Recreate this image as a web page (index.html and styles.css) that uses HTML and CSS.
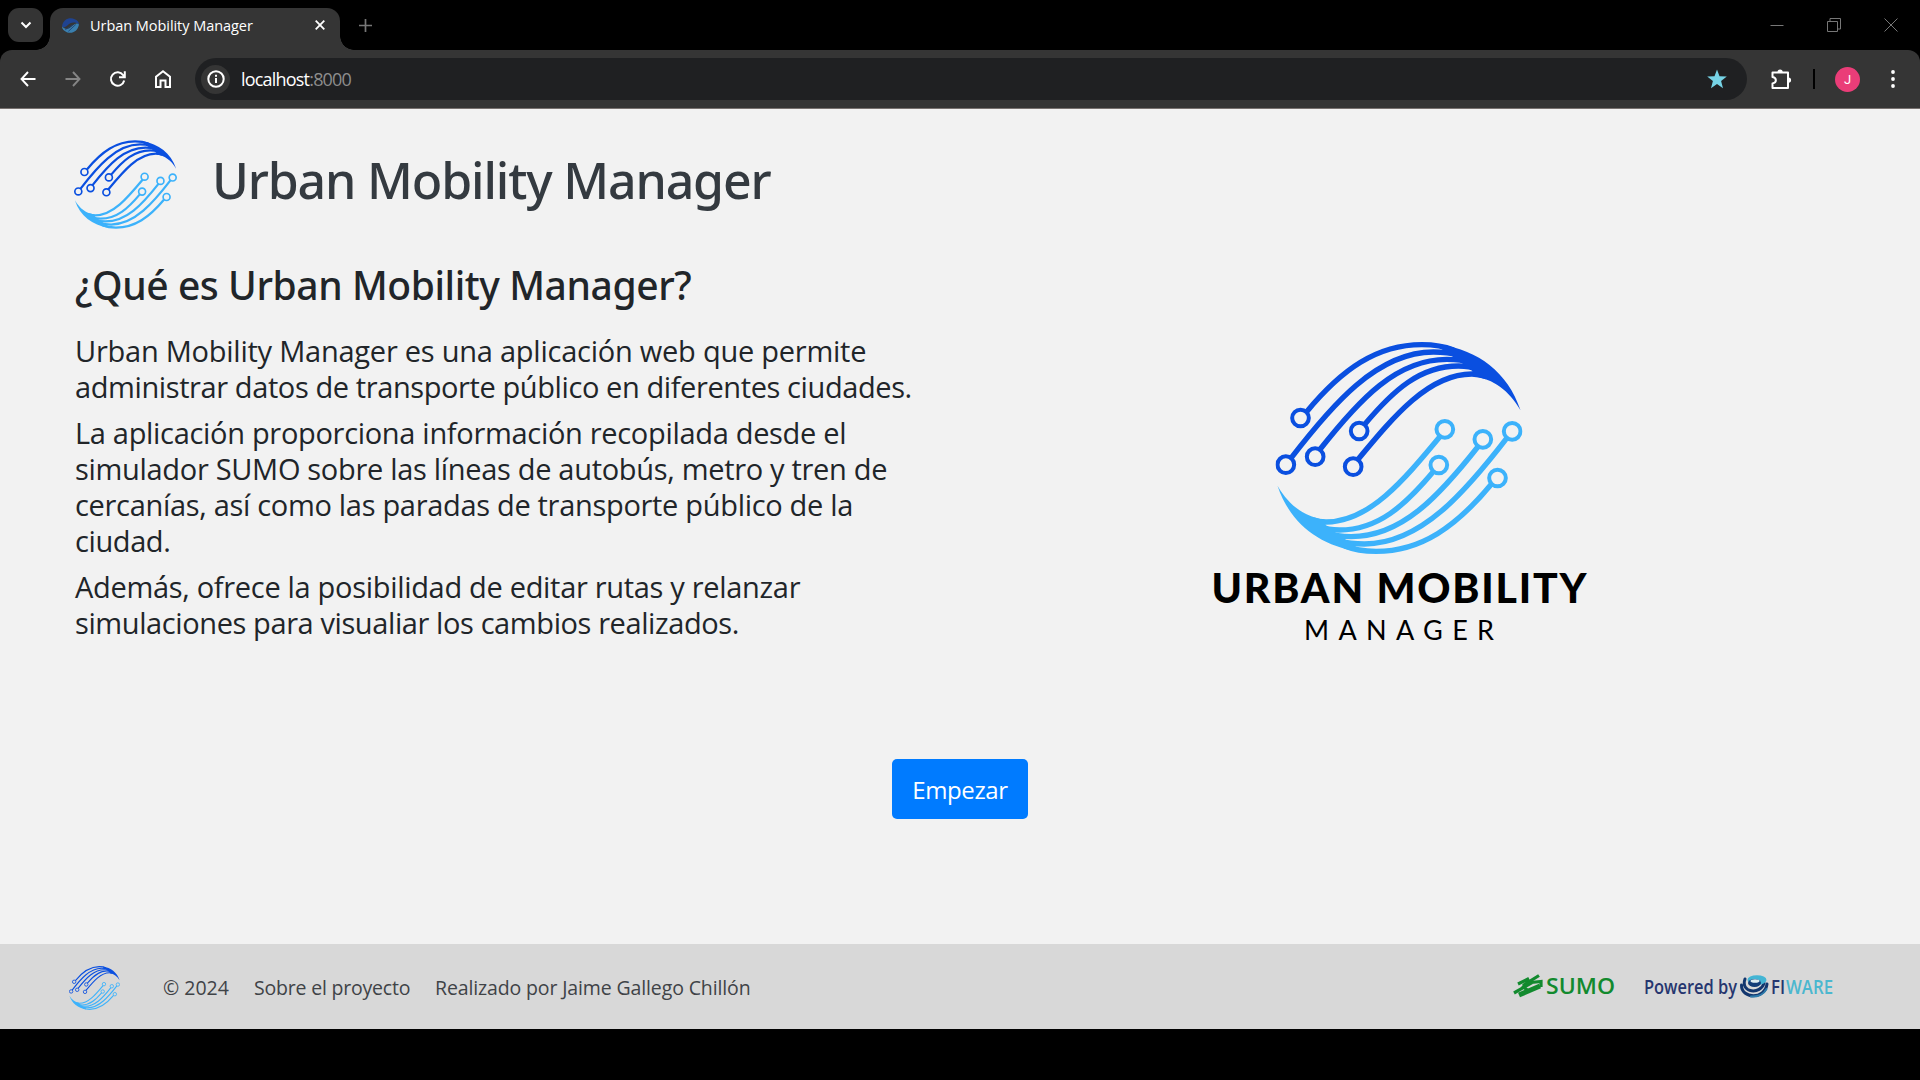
FILE: index.html
```html
<!DOCTYPE html>
<html lang="es">
<head>
<meta charset="utf-8">
<title>Urban Mobility Manager</title>
<link rel="stylesheet" href="styles.css">
</head>
<body>
<svg class="defs" width="0" height="0" aria-hidden="true">
  <defs>
    <g id="swoosh">
      <g fill="none" stroke="currentColor" stroke-width="16">
        <path d="M139 246C245 118 350 44 485 44C520 44 550 48 580 60"/>
        <path d="M92 385C215 225 350 66 520 66C550 66 570 68 600 76"/>
        <path d="M178 360C300 205 410 88 560 88C590 88 610 90 630 98"/>
        <path d="M312 285C400 180 480 108 595 108C620 108 635 110 650 118"/>
        <path d="M292 390C400 260 505 132 635 132C650 132 665 135 680 140"/>
      </g>
      <path fill="currentColor" d="M540 43C655 63 742 125 781 241C745 180 700 148 640 139L636 122L606 100L576 79L545 58Z"/>
      <g fill="none" stroke="currentColor" stroke-width="12">
        <circle cx="121" cy="264" r="25"/>
        <circle cx="77" cy="404" r="25"/>
        <circle cx="165" cy="380" r="25"/>
        <circle cx="297" cy="303" r="25"/>
        <circle cx="279" cy="410" r="25"/>
      </g>
    </g>
    <symbol id="logo" viewBox="46 36 741 636">
      <use href="#swoosh" color="#0a4fe0"/>
      <use href="#swoosh" color="#3cb2fb" transform="rotate(180 416.5 354)"/>
    </symbol>
  </defs>
</svg>

<div class="tabstrip">
  <div class="tab-search"><svg width="12" height="8" viewBox="0 0 12 8"><path d="M1.500 1.500L6 6L10.500 1.500" fill="none" stroke="#fff" stroke-width="2"/></svg></div>
  <div class="tab">
    <svg class="favicon" viewBox="0 0 16 14"><path d="M0 8C1 1 7-1 12 1C15 2 16 4 16 6C12 3 8 4 5 7C3 9 1 9 0 8Z" fill="#1f4390"/><path d="M16 6C15 12 10 15 5 13.500C2 12.500 0 10.500 0 8C3 11 6 11 9 8C11 6 14 4 16 6Z" fill="#3a7fae"/><path d="M3 11L10 6.500M6 12.500L13 6" stroke="#1c3f78" stroke-width=".8"/></svg>
    <span class="tab-title">Urban Mobility Manager</span>
    <svg width="10" height="10" viewBox="0 0 10 10"><path d="M.7 .7L9.300 9.300M9.300 .7L.7 9.300" stroke="#fff" stroke-width="1.800"/></svg>
  </div>
  <svg class="new-tab" width="13" height="13" viewBox="0 0 13 13"><path d="M6.500 0V13M0 6.500H13" stroke="#777" stroke-width="1.700"/></svg>
  <div class="window-buttons">
    <svg width="14" height="14" viewBox="0 0 14 14"><path d="M.5 7.500H13.500" stroke="#777"/></svg>
    <svg width="14" height="14" viewBox="0 0 14 14"><path d="M.5 3.500H10.500V13.500H.5ZM3 3V.5H13.500V11H11" fill="none" stroke="#777"/></svg>
    <svg width="14" height="14" viewBox="0 0 14 14"><path d="M.5 .5L13.500 13.500M13.500 .5L.5 13.500" stroke="#777"/></svg>
  </div>
</div>

<div class="toolbar">
  <svg class="nav" viewBox="0 0 16 16"><path d="M8 1L1.500 8L8 15M1.500 8H15.500" fill="none" stroke="#fff" stroke-width="1.900"/></svg>
  <svg class="nav" viewBox="0 0 16 16"><path d="M8 1L14.500 8L8 15M14.500 8H.5" fill="none" stroke="#858585" stroke-width="1.900"/></svg>
  <svg class="nav" viewBox="0 0 16 16"><path d="M14.200 9.500A6.700 6.700 0 1 1 13.200 4.200L14.600 6M14.800 .3V6.200H9" fill="none" stroke="#fff" stroke-width="2"/></svg>
  <svg class="nav home" viewBox="0 0 16 18"><path d="M1 17V6.800L8 1.300L15 6.800V17H10.500V10.500H5.500V17Z" fill="none" stroke="#fff" stroke-width="2"/></svg>
  <div class="omnibox">
    <span class="site-info"><svg width="18" height="18" viewBox="0 0 18 18"><circle cx="9" cy="9" r="7.700" fill="none" stroke="#fff" stroke-width="2"/><path d="M9 8V13M9 4.700V6.700" stroke="#fff" stroke-width="2"/></svg></span>
    <span class="url">localhost<span class="port">:8000</span></span>
    <svg class="star" width="20" height="20" viewBox="0 0 20 20"><path d="M10 .5L12.500 7.300L19.800 7.600L14.100 12.100L16 19.200L10 15.100L4 19.200L5.900 12.100L.2 7.600L7.500 7.300Z" fill="#76d3e6"/></svg>
  </div>
  <svg class="ext" width="21" height="21" viewBox="0 0 21 21"><path d="M1.500 3.500H17V19H1.500V14.500C6 13.500 6 9 1.500 8Z" fill="none" stroke="#fff" stroke-width="2" stroke-linejoin="round"/><path d="M6.500 3A2.600 2.600 0 0 1 11.700 3ZM17.500 8.500A2.600 2.600 0 0 1 17.500 13.700Z" fill="#fff"/></svg>
  <span class="divider"></span>
  <span class="avatar">J</span>
  <svg class="menu" width="4" height="18" viewBox="0 0 4 18"><g fill="#fff"><circle cx="2" cy="2" r="1.900"/><circle cx="2" cy="9" r="1.900"/><circle cx="2" cy="16" r="1.900"/></g></svg>
</div>

<div class="page">
  <header class="brand">
    <svg class="brand-logo"><use href="#logo"/></svg>
    <h1>Urban Mobility Manager</h1>
  </header>
  <main>
    <section class="about">
      <h2>¿Qué es Urban Mobility Manager?</h2>
      <p><span class="wide">Urban Mobility Manager es una aplicación web que permite</span><br><span class="narrow">administrar datos de transporte público en diferentes ciudades.</span></p>
      <p>La aplicación proporciona información recopilada desde el<br>simulador SUMO sobre las líneas de autobús, metro y tren de<br>cercanías, así como las paradas de transporte público de la<br><span class="narrow">ciudad.</span></p>
      <p>Además, ofrece la posibilidad de editar rutas y relanzar<br><span class="narrow">simulaciones para visualiar los cambios realizados.</span></p>
    </section>
    <svg class="hero" width="376" height="304" viewBox="0 0 376 304">
      <use href="#logo" x="62.500" y="0" width="247" height="212"/>
      <text class="word" x="-1.500" y="261" textLength="375">URBAN MOBILITY</text>
      <text class="sub" x="91" y="298" textLength="190">MANAGER</text>
    </svg>
  </main>
  <div class="actions"><button class="start">Empezar</button></div>
  <footer>
    <svg class="footer-logo"><use href="#logo"/></svg>
    <span class="copy">© 2024</span>
    <span class="about-link">Sobre el proyecto</span>
    <span class="author">Realizado por Jaime Gallego Chillón</span>
    <svg class="sumo" width="104" height="30" viewBox="0 -1 104 30">
      <g fill="none" stroke="#128a2e">
        <path d="M5 10L16 4.500M10 11.500L26 1.500M1 19L19 8.500" stroke-width="3.200"/>
        <path d="M6 21L27 12" stroke-width="5"/>
        <path d="M13 9L28 7.500V13M9 12L17 18" stroke-width="3.200"/>
      </g>
      <text class="sumo-text" x="33" y="19.500" textLength="69" lengthAdjust="spacingAndGlyphs">SUMO</text>
    </svg>
    <svg class="fiware" width="192" height="30" viewBox="0 -1 192 30">
      <text class="powered" x="0" y="20" textLength="93" lengthAdjust="spacingAndGlyphs">Powered by</text>
      <g fill="none" stroke-linecap="round">
        <path d="M97.500 11C97 25 121 26 123 10" stroke="#12366e" stroke-width="3"/>
        <path d="M101 5C96 19 117 21 120 9" stroke="#12366e" stroke-width="3"/>
        <path d="M107 22.500C114 23 120 20 122.500 15" stroke="#2d7bab" stroke-width="2"/>
      </g>
      <ellipse cx="113" cy="6" rx="9.500" ry="4.800" fill="#43b5d4"/>
      <ellipse cx="110.500" cy="9" rx="6.500" ry="4" fill="#123c78"/>
      <ellipse cx="111" cy="7" rx="4.500" ry="1.800" fill="#dcebf0"/>
      <text class="fi" x="127" y="20" textLength="14" lengthAdjust="spacingAndGlyphs">FI</text>
      <text class="ware" x="142" y="20" textLength="47" lengthAdjust="spacingAndGlyphs">WARE</text>
    </svg>
  </footer>
</div>
</body>
</html>
```
FILE: styles.css
```css
* { box-sizing: border-box; }
body {
  margin: 0;
  width: 1920px;
  height: 1080px;
  overflow: hidden;
  background: #000;
  font-family: "Open Sans", "Noto Sans", sans-serif;
  display: flex;
  flex-direction: column;
  white-space: nowrap;
}
svg { flex: none; display: block; overflow: visible; }
.defs { position: absolute; }

.tabstrip { height: 50px; display: flex; align-items: center; background: #000; flex: none; }
.tab-search {
  position: relative; z-index: 1;
  width: 35px; height: 34px; margin-left: 8px; border-radius: 11px;
  background: #343434; display: flex; align-items: center; justify-content: center;
}
.tab {
  position: relative; align-self: flex-end; width: 290px; height: 42px; margin-left: 7px; padding: 0 15px 8px 12px;
  background: #353535; border-radius: 13px 13px 0 0;
  display: flex; align-items: center;
}
.tab::before, .tab::after {
  content: ""; position: absolute; bottom: 0; width: 14px; height: 14px;
}
.tab::before { left: -14px; background: radial-gradient(circle at 0 0, #000 13.5px, #353535 14px); }
.tab::after { right: -14px; background: radial-gradient(circle at 100% 0, #000 13.5px, #353535 14px); }
.favicon { width: 17px; height: 15px; }
.tab-title { flex: 1; margin-left: 11px; color: #fff; font-size: 14.500px; letter-spacing: -.05px; }
.new-tab { margin-left: 19px; }
.window-buttons { margin-left: auto; display: flex; gap: 43px; padding-right: 22px; }

.toolbar {
  height: 59px; flex: none; display: flex; align-items: center; background: #353535;
  border-radius: 12px 12px 0 0; border-bottom: 1px solid #77716f; padding: 0 25px 0 20px;
}
.nav { width: 16px; height: 16px; margin-right: 29px; }
.home { height: 18px; margin-right: 24px; }
.omnibox {
  width: 1552px; height: 42px; border-radius: 21px; background: #1f2022;
  display: flex; align-items: center; padding: 0 20px 0 6px;
}
.site-info { width: 29px; height: 29px; border-radius: 50%; background: #353535; display: flex; align-items: center; justify-content: center; }
.url { margin-left: 11px; color: #fff; font-size: 18px; letter-spacing: -.8px; }
.port { color: #8d8d8d; }
.star { margin-left: auto; }
.ext { margin-left: 24px; }
.divider { width: 2px; height: 20px; margin-left: 21px; background: #000; }
.avatar {
  width: 25px; height: 25px; margin-left: 20px; border-radius: 50%; background: #ea3d78; color: #fff;
  font: 13px/25px Roboto, sans-serif; text-align: center;
}
.menu { margin-left: auto; }

.page { height: 920px; background: #f2f2f2; display: flex; flex-direction: column; color: #212529; }
.brand { height: 150px; padding: 31px 0 0 74px; display: flex; }
.brand-logo { width: 103px; height: 89px; }
h1, h2 { font-family: "Noto Sans", sans-serif; }
h1 { margin: 10px 0 0 35px; font-size: 50px; line-height: 60px; font-weight: 500; color: #343a40; letter-spacing: -1.15px; }
main { height: 500px; padding-left: 75px; display: flex; }
.about { width: 1138px; flex: none; }
h2 { margin: 2px 0 24px; font-size: 39px; line-height: 48px; font-weight: 500; letter-spacing: -.42px; }
p { margin: 0 0 10px; font-size: 29px; line-height: 36px; letter-spacing: -.31px; }
.wide { letter-spacing: -.24px; }
.narrow { letter-spacing: -.4px; }
.hero { margin-top: 83px; }
.word { font: 900 41px Lato, sans-serif; fill: #000; }
.sub { font: 400 27px Lato, sans-serif; fill: #000; }
.actions { display: flex; justify-content: center; }
.start {
  width: 136px; height: 60px; border: 0; border-radius: 5px; background: #007bff; color: #fff;
  font: 24px "Open Sans", sans-serif; letter-spacing: -.35px; padding: 0;
}
footer {
  margin-top: auto; height: 85px; background: #d8d8d8; display: flex; align-items: center;
  padding: 2px 84px 0 69px; font-size: 19.500px; color: #3f4347; letter-spacing: -.13px;
}
.footer-logo { width: 51px; height: 44px; }
.copy { margin-left: 43px; width: 91px; letter-spacing: 0; }
.about-link { width: 181px; letter-spacing: -.2px; }
.sumo { margin-left: auto; margin-right: 27px; }
.sumo text, .fiware text { letter-spacing: 0; }
.sumo-text { font: 600 21px "Open Sans", sans-serif; fill: #128a2e; }
.powered, .fi, .ware { font: 600 20px "Open Sans", sans-serif; fill: #26366f; }
.ware { fill: #4bb7cf; }
```
